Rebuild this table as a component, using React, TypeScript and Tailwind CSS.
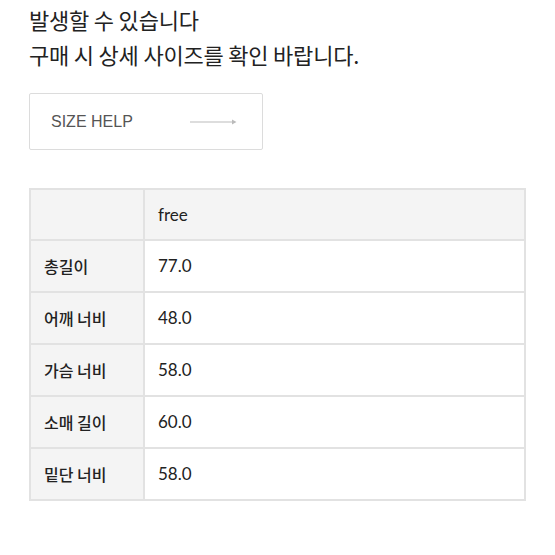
const rows = [
  { label: '총길이', value: '77.0' },
  { label: '어깨 너비', value: '48.0' },
  { label: '가슴 너비', value: '58.0' },
  { label: '소매 길이', value: '60.0' },
  { label: '밑단 너비', value: '58.0' },
];

export default function App() {
  return (
    <div className="w-[555px] h-[555px] bg-white overflow-hidden font-['Noto_Sans_CJK_KR',sans-serif] text-[#222]">
      <div className="pl-[29px] pt-[2px] text-[22px] leading-[35px] tracking-[-0.2px]">
        <p>발생할 수 있습니다</p>
        <p>구매 시 상세 사이즈를 확인 바랍니다.</p>
      </div>

      <div className="ml-[29px] mt-[21px] w-[234px] h-[57px] border border-[#dcdcdc] rounded-[2px] flex items-center pl-[21px] pr-[24px] justify-between">
        <span className="font-['Liberation_Sans',sans-serif] text-[16px] text-[#555]">SIZE HELP</span>
        <svg width="48" height="8" viewBox="0 0 48 8">
          <line x1="0" y1="4" x2="44" y2="4" stroke="#bbb" strokeWidth="1" />
          <path d="M42 1.5 L46.5 4 L42 6.5 Z" fill="#bbb" />
        </svg>
      </div>

      <table className="ml-[29px] mt-[38px] w-[497px] border-collapse text-[16px]">
        <tbody>
          <tr className="h-[51px] bg-[#f4f4f4]">
            <td className="w-[114px] border-2 border-[#e2e2e2]"></td>
            <td className="border-2 border-[#e2e2e2] pl-[13px] font-['Lato','Noto_Sans_CJK_KR',sans-serif] text-[17px] text-[#222]">free</td>
          </tr>
          {rows.map((r) => (
            <tr key={r.label} className="h-[52px]">
              <td className="w-[114px] bg-[#f4f4f4] border-2 border-[#e2e2e2] pl-[13px] font-medium text-[#222]">{r.label}</td>
              <td className="border-2 border-[#e2e2e2] pl-[13px] font-['Lato','Noto_Sans_CJK_KR',sans-serif] text-[17px] text-[#222]">{r.value}</td>
            </tr>
          ))}
        </tbody>
      </table>
    </div>
  );
}
